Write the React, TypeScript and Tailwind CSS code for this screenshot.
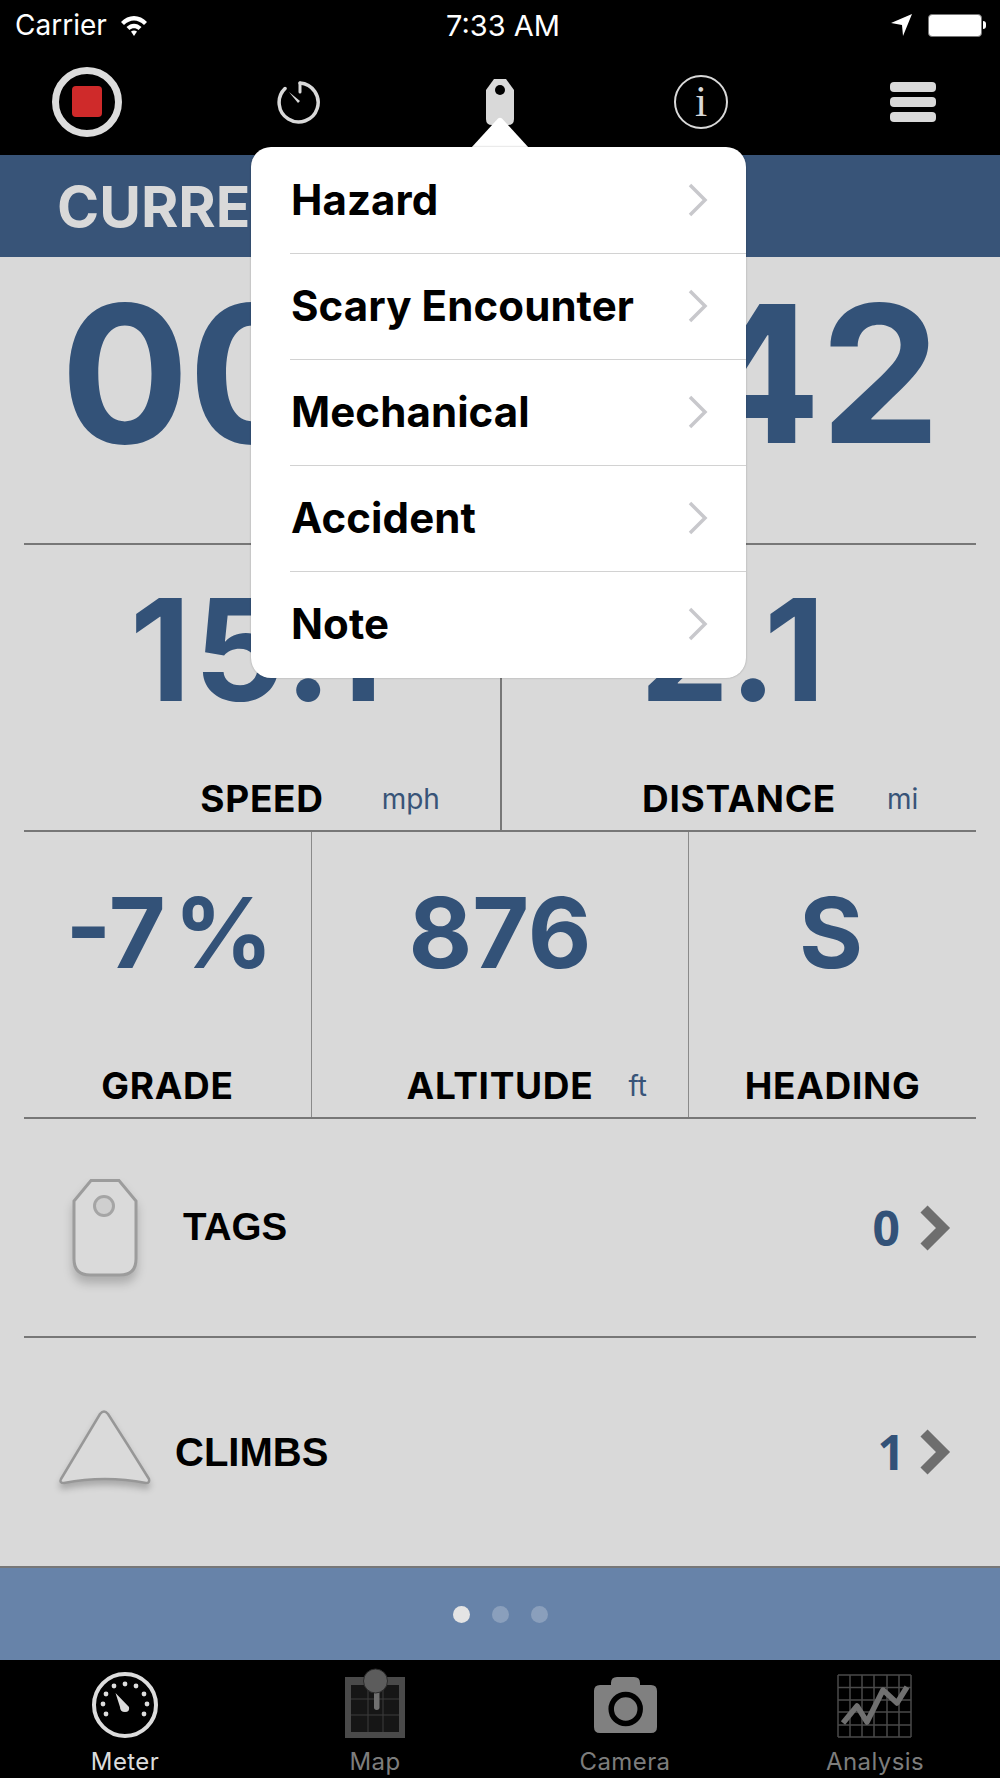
import { Fragment } from "react";

const tagItems = ["Hazard", "Scary Encounter", "Mechanical", "Accident", "Note"];
const meterDots = [
  [-19, 9], [-22, -1], [-19, -11], [-11, -19], [0, -21], [11, -19], [19, -11], [22, -1], [19, 9],
];

function StatusBar() {
  return (
    <div className="grid h-[50px] grid-cols-3 items-center bg-black text-white">
      <div className="flex items-center pl-[15px] text-[28px] leading-none">
        Carrier
        <svg className="ml-[12px]" width="30" height="24" viewBox="0 0 30 24">
          <path d="M2 9 C9 1 21 1 28 9 L25 12 C19 6 11 6 5 12 Z" fill="#fff" />
          <path d="M7.5 14 C12 9.500 18 9.500 22.500 14 L19.500 17 C17 14.500 13 14.500 10.500 17 Z" fill="#fff" />
          <path d="M12 18.500 C14 17 16 17 18 18.500 L15 23 Z" fill="#fff" />
        </svg>
      </div>
      <div className="pl-[6px] text-center text-[29px] leading-none">7:33 AM</div>
      <div className="flex items-center justify-end pr-[14px]">
        <svg width="22" height="22" viewBox="0 0 22 22">
          <path d="M0 9 L21 0 L12 22 L11 11 Z" fill="#fff" />
        </svg>
        <div className="ml-[15px] h-[23px] w-[54px] rounded-[4px] border border-[#777] bg-white" />
        <div className="ml-[1px] h-[8px] w-[3px] rounded-r-full bg-white" />
      </div>
    </div>
  );
}

function Toolbar() {
  return (
    <div className="flex h-[105px] items-center bg-black pb-[2px] pl-[52px]">
      <div className="flex h-[70px] w-[70px] items-center justify-center rounded-full border-[7px] border-[#dcdcdc]">
        <div className="h-[31px] w-[30px] rounded-[4px] bg-[#cf2a2a]" />
      </div>
      <svg className="ml-[155px]" width="44" height="44" viewBox="0 0 44 44">
        <path d="M23 3 A19.500 19.500 0 1 1 8 8.500" fill="none" stroke="#d9d9d9" strokeWidth="3.500" strokeLinecap="round" />
        <path d="M23 3 L23 12" stroke="#d9d9d9" strokeWidth="3" strokeLinecap="round" />
        <path d="M12 12 L23 21 L21 23 Z" fill="#d9d9d9" />
      </svg>
      <svg className="ml-[164px]" width="30" height="48" viewBox="0 0 30 48">
        <path d="M9 1 H21 L29 12 V41 Q29 47 23 47 H7 Q1 47 1 41 V12 Z" fill="#d9d9d9" />
        <circle cx="15" cy="12" r="5" fill="#000" />
      </svg>
      <div className="relative ml-[159px] flex h-[54px] w-[54px] items-center justify-center rounded-full border-2 border-[#d9d9d9] font-['Liberation_Serif',serif] text-[44px] leading-none text-[#d9d9d9]">
        i
      </div>
      <div className="ml-[162px] flex w-[46px] flex-col gap-[5px]">
        <div className="h-[10px] rounded-[4px] bg-[#d9d9d9]" />
        <div className="h-[10px] rounded-[4px] bg-[#d9d9d9]" />
        <div className="h-[10px] rounded-[4px] bg-[#d9d9d9]" />
      </div>
    </div>
  );
}

function Metric({
  value,
  label,
  unit,
  unitClass = "",
  valueClass,
  paddingClass,
  className = "",
}: {
  value: string;
  label: string;
  unit?: string;
  unitClass?: string;
  valueClass: string;
  paddingClass: string;
  className?: string;
}) {
  return (
    <div className={`flex flex-col items-center justify-between pb-[13px] ${paddingClass} ${className}`}>
      <div className={`font-bold leading-none text-[#335278] ${valueClass}`}>{value}</div>
      <div className="grid w-full grid-cols-[1fr_auto_1fr] items-center">
        <div />
        <div className="text-[37px] font-bold leading-none tracking-[0.7px] text-black">{label}</div>
        <div className={`text-[28px] leading-none text-[#385478] ${unitClass}`}>{unit}</div>
      </div>
    </div>
  );
}

function RowChevron() {
  return (
    <svg width="32" height="46" viewBox="0 0 32 46">
      <path d="M4 4 L23 23 L4 42" fill="none" stroke="#6e6e6e" strokeWidth="10" />
    </svg>
  );
}

function TagOutline() {
  return (
    <svg className="drop-shadow-[0_7px_5px_rgba(0,0,0,0.2)]" width="66" height="98" viewBox="0 0 66 98">
      <path d="M19 1.500 H47 L64 22 V80 Q64 96 48 96 H18 Q2 96 2 80 V22 Z" fill="#dadada" stroke="#9c9c9c" strokeWidth="3" />
      <circle cx="32" cy="27" r="9.500" fill="#cfcfcf" stroke="#a5a5a5" strokeWidth="3" />
    </svg>
  );
}

function ClimbOutline() {
  return (
    <svg className="mb-[9px] drop-shadow-[0_5px_3px_rgba(0,0,0,0.22)]" width="94" height="78" viewBox="0 0 94 78">
      <path d="M3 70 L42 5 Q46 -0 50 5 Q70 36 91 70 Q92 74 88 74 Q47 66 6 74 Q1 74 3 70 Z" fill="#dadada" stroke="#979797" strokeWidth="2.500" />
    </svg>
  );
}

function MeterIcon() {
  return (
    <svg width="80" height="80" viewBox="-40 -39 80 80">
      <circle r="31" fill="none" stroke="#dcdcdc" strokeWidth="4" />
      {meterDots.map(([x, y]) => (
        <circle key={`${x}-${y}`} cx={x} cy={y} r="2.400" fill="#dcdcdc" />
      ))}
      <path d="M-9.500 -12 L4 2 Q5 7 0 7 Q-5 7 -5 2 Z" fill="#dcdcdc" />
    </svg>
  );
}

function MapIcon() {
  return (
    <svg width="80" height="80" viewBox="0 0 80 80">
      <rect x="10" y="11" width="60" height="61" fill="#4a4a4a" />
      <rect x="16" y="19" width="48" height="47" fill="#161616" />
      <path d="M16 33 H64 M16 49 H64 M33 19 V66 M48 19 V66" stroke="#3d3d3d" strokeWidth="1" />
      <rect x="39" y="16" width="5.500" height="28" rx="2.700" fill="#707070" />
      <circle cx="40.500" cy="15" r="12" fill="#5c5c5c" stroke="#2b2b2b" strokeWidth="1" />
    </svg>
  );
}

function CameraIcon() {
  return (
    <svg width="80" height="80" viewBox="0 0 80 80">
      <path d="M26 19 V17 Q26 11 32 11 H49 Q55 11 55 17 V19 H66 Q72 19 72 25 V61 Q72 67 66 67 H15 Q9 67 9 61 V25 Q9 19 15 19 Z" fill="#808080" />
      <circle cx="40.700" cy="43" r="14.500" fill="#808080" stroke="#000" strokeWidth="5.500" />
    </svg>
  );
}

function AnalysisIcon() {
  const vertical = [3, 15, 27, 39, 52, 64, 76];
  const horizontal = [9, 21.500, 34, 46, 59, 71];
  return (
    <svg width="80" height="80" viewBox="0 0 80 80">
      {vertical.map((x) => (
        <line key={x} x1={x} x2={x} y1="9" y2="71" stroke="#4a4a4a" strokeWidth="1.500" />
      ))}
      {horizontal.map((y) => (
        <line key={y} x1="3" x2="76" y1={y} y2={y} stroke="#4a4a4a" strokeWidth="1.500" />
      ))}
      <path d="M8 57 L22 40 L32 56 L48 24 L62 37 L72 21" fill="none" stroke="#707070" strokeWidth="5.500" strokeLinejoin="round" />
    </svg>
  );
}

function TabItem({ label, active, children }: { label: string; active?: boolean; children: React.ReactNode }) {
  return (
    <div className="flex flex-col items-center pt-[6px]">
      <div className="h-[84px] w-[80px]">{children}</div>
      <div className={`text-[24px] leading-none tracking-[0.4px] ${active ? "text-[#dcdcdc]" : "text-[#7d7d7d]"}`}>
        {label}
      </div>
    </div>
  );
}

function TagPopover() {
  return (
    <Fragment>
      <svg className="absolute left-[471px] top-[117px]" width="58" height="31" viewBox="0 0 58 31">
        <path d="M0 31 L27 1.500 Q29 0 31 1.500 L58 31 Z" fill="#fff" />
      </svg>
      <div className="absolute left-[251px] top-[147px] w-[495px] overflow-hidden rounded-[20px] bg-white pt-[1px] shadow-[0_0_2px_rgba(0,0,0,0.3)]">
        {tagItems.map((item, index) => (
          <div
            key={item}
            className={`ml-[39px] flex h-[106px] items-center pb-[2px] pl-[1px] pr-[38px] ${index < tagItems.length - 1 ? "border-b border-[#d2d2d2]" : ""}`}
          >
            <span className="flex-1 text-[42px] font-bold leading-none tracking-[0.1px] text-black">{item}</span>
            <svg width="20" height="34" viewBox="0 0 20 34">
              <path d="M2 2 L17 17 L2 32" fill="none" stroke="#c8c8cc" strokeWidth="3.500" />
            </svg>
          </div>
        ))}
      </div>
    </Fragment>
  );
}

export default function App() {
  return (
    <div className="relative h-[1778px] w-[1000px] overflow-hidden bg-[#d9d9d9] font-['Inter',sans-serif]">
      <StatusBar />
      <Toolbar />

      <div className="flex h-[102px] items-center bg-[#385478] pl-[57px]">
        <span className="text-[57px] font-bold leading-none text-[#d9d9d9]">CURRENT RIDE</span>
      </div>

      <div className="mx-6 flex h-[288px] justify-center border-b-2 border-[#777] pt-[21px]">
        <div className="text-[191px] font-bold leading-none tracking-[-1px] whitespace-nowrap text-[#335278]">00:34:42</div>
      </div>

      <div className="mx-6 grid h-[287px] grid-cols-2 border-b-2 border-[#777]">
        <Metric value="15.1" label="SPEED" unit="mph" unitClass="pl-[58px]" valueClass="pr-[8px] text-[142px] tracking-[3px]" paddingClass="pt-[33px]" />
        <Metric value="2.1" label="DISTANCE" unit="mi" unitClass="pl-[51px]" valueClass="pr-[13px] text-[142px]" paddingClass="pt-[33px]" className="border-l-2 border-[#777]" />
      </div>

      <div className="mx-6 grid h-[287px] grid-cols-[288px_377px_1fr] border-b-2 border-[#777]">
        <Metric value="-7 %" label="GRADE" valueClass="pl-[4px] text-[98px] [word-spacing:-15px]" paddingClass="pt-[52px]" className="border-r border-[#8a8a8a]" />
        <Metric value="876" label="ALTITUDE" unit="ft" unitClass="pl-[35px]" valueClass="text-[98px]" paddingClass="pt-[52px]" className="border-r border-[#8a8a8a]" />
        <Metric value="S" label="HEADING" valueClass="pr-[3px] text-[98px]" paddingClass="pt-[52px]" />
      </div>

      <div className="mx-6 flex h-[219px] items-center border-b-2 border-[#777] pl-[48px] pr-[24px]">
        <TagOutline />
        <span className="ml-[45px] flex-1 font-['Liberation_Sans',sans-serif] text-[38.500px] font-bold leading-none text-black">TAGS</span>
        <span className="mr-[20px] font-['Open_Sans',sans-serif] text-[48px] font-bold leading-none text-[#335278]">0</span>
        <RowChevron />
      </div>

      <div className="mx-6 flex h-[228px] items-center pl-[34px] pr-[24px]">
        <ClimbOutline />
        <span className="ml-[23px] flex-1 font-['Liberation_Sans',sans-serif] text-[40px] font-bold leading-none text-black">CLIMBS</span>
        <span className="mr-[15px] font-['Open_Sans',sans-serif] text-[48px] font-bold leading-none text-[#335278]">1</span>
        <RowChevron />
      </div>

      <div className="flex h-[94px] items-center justify-center gap-[22px] border-t-2 border-[#777] bg-[#6783a9]">
        <div className="h-[17px] w-[17px] rounded-full bg-[#e4e4e4]" />
        <div className="h-[17px] w-[17px] rounded-full bg-[#8a9fbc]" />
        <div className="h-[17px] w-[17px] rounded-full bg-[#8a9fbc]" />
      </div>

      <div className="grid h-[118px] grid-cols-4 bg-black">
        <TabItem label="Meter" active>
          <MeterIcon />
        </TabItem>
        <TabItem label="Map">
          <MapIcon />
        </TabItem>
        <TabItem label="Camera">
          <CameraIcon />
        </TabItem>
        <TabItem label="Analysis">
          <AnalysisIcon />
        </TabItem>
      </div>

      <TagPopover />
    </div>
  );
}
